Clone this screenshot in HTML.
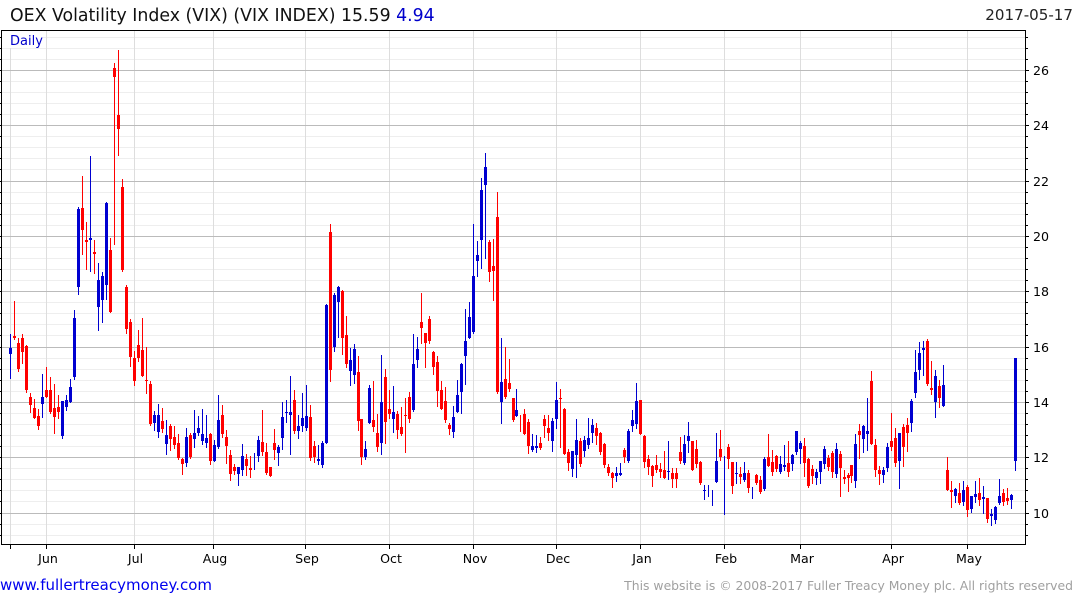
<!DOCTYPE html>
<html><head><meta charset="utf-8"><title>OEX Volatility Index</title>
<style>
html,body{margin:0;padding:0;background:#fff}
svg{display:block}
text{font-family:"DejaVu Sans","Liberation Sans",sans-serif}
</style></head><body>
<svg xmlns="http://www.w3.org/2000/svg" width="1075" height="600" viewBox="0 0 1075 600">
<rect width="1075" height="600" fill="#fff"/>
<g shape-rendering="crispEdges" fill="none">
<path stroke="#eeeeee" stroke-width="1" d="M2 37.5H1025M2 48.5H1025M2 59.5H1025M2 81.5H1025M2 92.5H1025M2 103.5H1025M2 114.5H1025M2 136.5H1025M2 147.5H1025M2 158.5H1025M2 169.5H1025M2 192.5H1025M2 203.5H1025M2 214.5H1025M2 225.5H1025M2 247.5H1025M2 258.5H1025M2 269.5H1025M2 280.5H1025M2 302.5H1025M2 313.5H1025M2 324.5H1025M2 335.5H1025M2 358.5H1025M2 369.5H1025M2 380.5H1025M2 391.5H1025M2 413.5H1025M2 424.5H1025M2 435.5H1025M2 446.5H1025M2 468.5H1025M2 479.5H1025M2 490.5H1025M2 501.5H1025M2 524.5H1025M2 535.5H1025"/>
<path stroke="#dddddd" stroke-width="1" d="M10.5 31V544M46.5 31V544M134.5 31V544M213.5 31V544M305.5 31V544M389.5 31V544M473.5 31V544M556.5 31V544M640.5 31V544M724.5 31V544M800.5 31V544M891.5 31V544M967.5 31V544"/>
<path stroke="#bbbbbb" stroke-width="1" d="M2 70.5H1025M2 125.5H1025M2 181.5H1025M2 236.5H1025M2 291.5H1025M2 347.5H1025M2 402.5H1025M2 457.5H1025M2 513.5H1025"/>
<rect x="2" y="31" width="41" height="17" fill="#fff"/>
<!-- blue wicks -->
<path stroke="#0000d0" stroke-width="1" d="M10.5 334V379M42.5 374V418M62.5 401V439M66.5 395V411M70.5 379V403M74.5 310V380M78.5 207V295M90.5 156V272M98.5 263V331M102.5 272V323M106.5 202V300M154.5 411V431M158.5 404V438M166.5 420V455M186.5 428V467M194.5 410V448M198.5 416V436M202.5 409V445M206.5 415V448M214.5 440V462M218.5 395V449M238.5 467V486M242.5 444V476M254.5 453V470M258.5 436V462M278.5 445V466M282.5 402V450M286.5 400V423M290.5 376V455M298.5 415V439M302.5 393V432M306.5 385V431M318.5 445V465M322.5 441V468M326.5 304V444M334.5 293V352M338.5 286V338M350.5 348V386M354.5 344V384M365.5 441V460M369.5 385V424M381.5 355V455M393.5 386V433M413.5 334V412M417.5 337V368M453.5 406V438M457.5 380V413M461.5 363V414M465.5 309V385M469.5 302V339M473.5 224V334M477.5 241V277M481.5 178V269M485.5 153V259M501.5 338V424M516.5 389V417M532.5 434V452M536.5 435V453M552.5 418V452M556.5 382V429M572.5 451V477M576.5 419V478M584.5 436V457M588.5 418V449M592.5 419V443M616.5 467V482M620.5 463V476M628.5 429V463M632.5 410V432M636.5 383V429M668.5 441V480M684.5 435V465M688.5 422V453M704.5 485V500M708.5 485V497M712.5 490V506M716.5 433V483M724.5 456V515M736.5 462V484M744.5 462V482M752.5 487V499M764.5 457V491M780.5 456V474M784.5 445V471M792.5 454V471M796.5 431V455M800.5 441V464M816.5 469V485M820.5 461V484M824.5 446V469M836.5 443V478M855.5 434V488M863.5 425V453M867.5 398V451M883.5 467V483M887.5 443V472M899.5 433V489M911.5 399V432M915.5 350V398M919.5 342V380M923.5 341V376M935.5 370V418M943.5 365V407M955.5 488V503M963.5 481V506M971.5 496V513M975.5 481V503M983.5 486V514M991.5 509V526M995.5 506V524M999.5 479V505M1011.5 494V509M1015.5 358V471"/>
<!-- blue bodies -->
<path stroke="#0000d0" stroke-width="3" d="M10.5 348V354M42.5 397V404M62.5 401V436M66.5 400V407M70.5 387V402M74.5 318V377M78.5 209V287M90.5 238V240M98.5 280V307M102.5 276V300M106.5 203V285M154.5 415V423M158.5 415V432M166.5 435V444M186.5 437V463M194.5 433V439M198.5 428V433M202.5 434V441M206.5 438V443M214.5 445V461M218.5 420V447M238.5 467V474M242.5 456V470M258.5 440V456M278.5 447V453M282.5 417V438M286.5 412V413M290.5 412V415M298.5 426V431M302.5 418V426M306.5 416V428M318.5 459V461M322.5 443V465M326.5 305V443M334.5 295V347M338.5 287V302M350.5 360V371M354.5 349V375M365.5 449V457M369.5 388V423M381.5 402V443M393.5 412V419M413.5 364V410M417.5 349V360M453.5 417V432M457.5 395V412M461.5 364V392M465.5 341V356M469.5 317V338M473.5 276V332M477.5 255V261M481.5 190V240M485.5 167V185M501.5 382V402M516.5 410V416M532.5 446V450M536.5 446V448M552.5 421V441M556.5 400V419M572.5 451V469M576.5 440V455M584.5 440V451M588.5 438V445M592.5 425V433M616.5 473V476M620.5 473V475M628.5 431V461M632.5 420V426M636.5 401V424M668.5 471V472M684.5 444V463M688.5 436V441M704.5 490V491M716.5 461V482M736.5 473V474M744.5 473V480M764.5 459V489M780.5 464V472M784.5 465V467M792.5 455V464M796.5 431V452M800.5 443V449M816.5 472V478M820.5 461V472M824.5 449V464M836.5 449V474M855.5 444V481M863.5 426V439M867.5 431V434M883.5 470V475M887.5 447V468M899.5 433V461M911.5 401V423M915.5 372V393M919.5 353V370M923.5 348V350M935.5 376V402M943.5 385V406M955.5 489V496M963.5 490V502M971.5 496V509M975.5 494V497M983.5 497V499M991.5 514V516M995.5 507V520M999.5 496V503M1011.5 495V500M1015.5 358V461"/>
<!-- red wicks -->
<path stroke="#ff0000" stroke-width="1" d="M14.5 301V340M18.5 338V372M22.5 334V364M26.5 345V393M30.5 393V413M34.5 399V419M38.5 409V430M46.5 367V398M50.5 377V414M54.5 384V434M58.5 395V419M82.5 176V255M86.5 222V270M94.5 240V274M110.5 238V313M114.5 63V245M118.5 50V156M122.5 179V272M126.5 285V334M130.5 319V367M134.5 351V386M138.5 330V362M142.5 318V377M146.5 347V394M150.5 381V426M162.5 408V433M170.5 424V451M174.5 426V449M178.5 434V460M182.5 458V475M190.5 433V459M210.5 433V465M222.5 405V438M226.5 430V464M230.5 450V481M234.5 464V475M246.5 454V476M250.5 456V478M262.5 410V456M266.5 443V475M270.5 467V477M274.5 429V460M294.5 390V434M310.5 405V461M314.5 441V463M330.5 224V382M342.5 290V355M346.5 316V368M358.5 356V431M361.5 419V465M373.5 381V432M377.5 414V452M385.5 369V444M389.5 390V419M397.5 411V439M401.5 407V436M405.5 398V453M409.5 392V423M421.5 293V344M425.5 333V368M429.5 316V344M433.5 351V375M437.5 356V407M441.5 381V410M445.5 387V423M449.5 423V435M489.5 240V282M493.5 239V301M497.5 192V394M505.5 347V399M509.5 359V392M513.5 398V422M520.5 415V432M524.5 409V435M528.5 419V454M540.5 437V450M544.5 415V438M548.5 415V441M560.5 389V448M564.5 408V455M568.5 449V471M580.5 438V467M596.5 423V445M600.5 432V455M604.5 443V468M608.5 464V476M612.5 472V488M624.5 448V463M640.5 400V435M644.5 435V468M648.5 455V475M652.5 465V487M656.5 455V473M660.5 463V478M664.5 451V479M672.5 468V488M676.5 468V488M680.5 437V464M692.5 441V471M696.5 440V468M700.5 461V485M720.5 430V461M728.5 444V469M732.5 462V494M740.5 467V484M748.5 470V493M756.5 474V485M760.5 476V494M768.5 434V467M772.5 450V476M776.5 455V472M788.5 441V477M804.5 438V477M808.5 458V488M812.5 465V484M828.5 455V471M832.5 451V478M840.5 451V497M844.5 470V484M848.5 473V492M851.5 465V483M859.5 424V459M871.5 371V445M875.5 439V477M879.5 466V485M891.5 413V451M895.5 428V467M903.5 424V467M907.5 418V452M927.5 339V386M931.5 361V395M939.5 380V408M947.5 457V491M951.5 481V508M959.5 483V505M967.5 485V517M979.5 478V506M987.5 498V523M1003.5 489V506M1007.5 488V505"/>
<!-- red bodies -->
<path stroke="#ff0000" stroke-width="3" d="M14.5 336V338M18.5 343V369M22.5 338V352M26.5 346V390M30.5 397V405M34.5 408V418M38.5 416V426M46.5 390V397M50.5 390V412M54.5 408V417M58.5 407V412M82.5 208V230M86.5 240V242M94.5 252V254M110.5 250V312M114.5 68V77M118.5 115V129M122.5 187V270M126.5 287V329M130.5 322V357M134.5 358V381M138.5 345V358M142.5 350V376M146.5 380V381M150.5 384V424M162.5 421V429M170.5 426V439M174.5 437V445M178.5 443V458M182.5 459V464M190.5 435V457M210.5 434V461M222.5 415V434M226.5 437V446M230.5 455V474M234.5 467V471M246.5 459V466M250.5 468V470M262.5 442V452M266.5 452V473M270.5 467V476M274.5 443V450M294.5 400V431M310.5 417V458M314.5 446V457M330.5 232V370M342.5 291V338M346.5 335V364M358.5 372V421M361.5 419V457M373.5 420V427M377.5 433V447M385.5 377V422M389.5 409V414M397.5 414V430M401.5 427V434M405.5 415V416M409.5 397V419M421.5 322V328M425.5 333V343M429.5 319V341M433.5 352V367M437.5 362V391M441.5 390V409M445.5 401V420M449.5 425V429M489.5 242V272M493.5 266V271M497.5 217V392M505.5 379V397M509.5 383V389M513.5 398V420M524.5 414V434M528.5 422V446M540.5 443V448M544.5 419V426M548.5 428V433M560.5 398V399M564.5 409V454M568.5 452V463M580.5 441V464M596.5 428V436M600.5 433V452M604.5 444V465M608.5 467V473M612.5 473V478M624.5 450V457M640.5 400V434M644.5 436V462M648.5 459V467M652.5 466V476M656.5 465V470M660.5 469V472M664.5 470V478M672.5 473V479M676.5 473V479M680.5 452V461M692.5 441V470M696.5 449V464M700.5 462V483M720.5 449V457M728.5 447V459M732.5 462V486M740.5 474V477M748.5 473V488M756.5 475V483M760.5 480V492M768.5 457V466M772.5 462V472M776.5 456V469M788.5 463V472M804.5 446V463M808.5 459V486M812.5 469V476M828.5 458V467M832.5 453V472M840.5 454V468M844.5 477V479M848.5 475V478M851.5 465V476M859.5 431V435M871.5 381V444M875.5 445V470M879.5 470V474M891.5 441V447M895.5 438V463M903.5 427V447M907.5 425V433M927.5 341V384M931.5 388V390M939.5 386V398M947.5 470V490M951.5 490V492M959.5 493V503M967.5 487V510M979.5 493V500M987.5 498V519M1003.5 493V502M1007.5 498V501"/>
<!-- axes -->
<path stroke="#000" stroke-width="1" d="M1 30.5H1026M1.5 30V545M1 544.5H1026M1025.5 30V545"/>
<path stroke="#000" stroke-width="1" d="M0 37.5H1M0 48.5H1M0 59.5H1M0 70.5H1M0 81.5H1M0 92.5H1M0 103.5H1M0 114.5H1M0 125.5H1M0 136.5H1M0 147.5H1M0 158.5H1M0 169.5H1M0 181.5H1M0 192.5H1M0 203.5H1M0 214.5H1M0 225.5H1M0 236.5H1M0 247.5H1M0 258.5H1M0 269.5H1M0 280.5H1M0 291.5H1M0 302.5H1M0 313.5H1M0 324.5H1M0 335.5H1M0 347.5H1M0 358.5H1M0 369.5H1M0 380.5H1M0 391.5H1M0 402.5H1M0 413.5H1M0 424.5H1M0 435.5H1M0 446.5H1M0 457.5H1M0 468.5H1M0 479.5H1M0 490.5H1M0 501.5H1M0 513.5H1M0 524.5H1M0 535.5H1"/>
<path stroke="#000" stroke-width="1" d="M1026 37.5H1028M1026 48.5H1028M1026 59.5H1028M1026 81.5H1028M1026 92.5H1028M1026 103.5H1028M1026 114.5H1028M1026 136.5H1028M1026 147.5H1028M1026 158.5H1028M1026 169.5H1028M1026 192.5H1028M1026 203.5H1028M1026 214.5H1028M1026 225.5H1028M1026 247.5H1028M1026 258.5H1028M1026 269.5H1028M1026 280.5H1028M1026 302.5H1028M1026 313.5H1028M1026 324.5H1028M1026 335.5H1028M1026 358.5H1028M1026 369.5H1028M1026 380.5H1028M1026 391.5H1028M1026 413.5H1028M1026 424.5H1028M1026 435.5H1028M1026 446.5H1028M1026 468.5H1028M1026 479.5H1028M1026 490.5H1028M1026 501.5H1028M1026 524.5H1028M1026 535.5H1028M1026 70.5H1029M1026 125.5H1029M1026 181.5H1029M1026 236.5H1029M1026 291.5H1029M1026 347.5H1029M1026 402.5H1029M1026 457.5H1029M1026 513.5H1029"/>
<path stroke="#000" stroke-width="1" d="M10.5 545V549M46.5 545V549M134.5 545V549M213.5 545V549M305.5 545V549M389.5 545V549M473.5 545V549M556.5 545V549M640.5 545V549M724.5 545V549M800.5 545V549M891.5 545V549M967.5 545V549"/>
</g>
<text x="10" y="21" font-size="17.33" fill="#111">OEX Volatility Index (VIX) (VIX INDEX) 15.59 <tspan fill="#0000cc">4.94</tspan></text>
<text x="1073" y="20" font-size="15.1" fill="#222" text-anchor="end">2017-05-17</text>
<text x="10" y="45" font-size="13" fill="#0000cc">Daily</text>
<g font-size="12.6" fill="#000">
<text x="1033" y="75">26</text><text x="1033" y="130">24</text><text x="1033" y="186">22</text><text x="1033" y="241">20</text><text x="1033" y="296">18</text><text x="1033" y="352">16</text><text x="1033" y="407">14</text><text x="1033" y="462">12</text><text x="1033" y="518">10</text>
</g>
<g font-size="12.6" fill="#000" text-anchor="middle">
<text x="48" y="563">Jun</text><text x="135.5" y="563">Jul</text><text x="215" y="563">Aug</text><text x="307" y="563">Sep</text><text x="391" y="563">Oct</text><text x="475" y="563">Nov</text><text x="558" y="563">Dec</text><text x="642" y="563">Jan</text><text x="726" y="563">Feb</text><text x="802" y="563">Mar</text><text x="893" y="563">Apr</text><text x="969" y="563">May</text>
</g>
<text x="0" y="590" font-size="15" fill="#0000ee">www.fullertreacymoney.com</text>
<text x="1073" y="590" font-size="12.4" fill="#a0a0a0" text-anchor="end">This website is © 2008-2017 Fuller Treacy Money plc. All rights reserved</text>
</svg>
</body></html>
